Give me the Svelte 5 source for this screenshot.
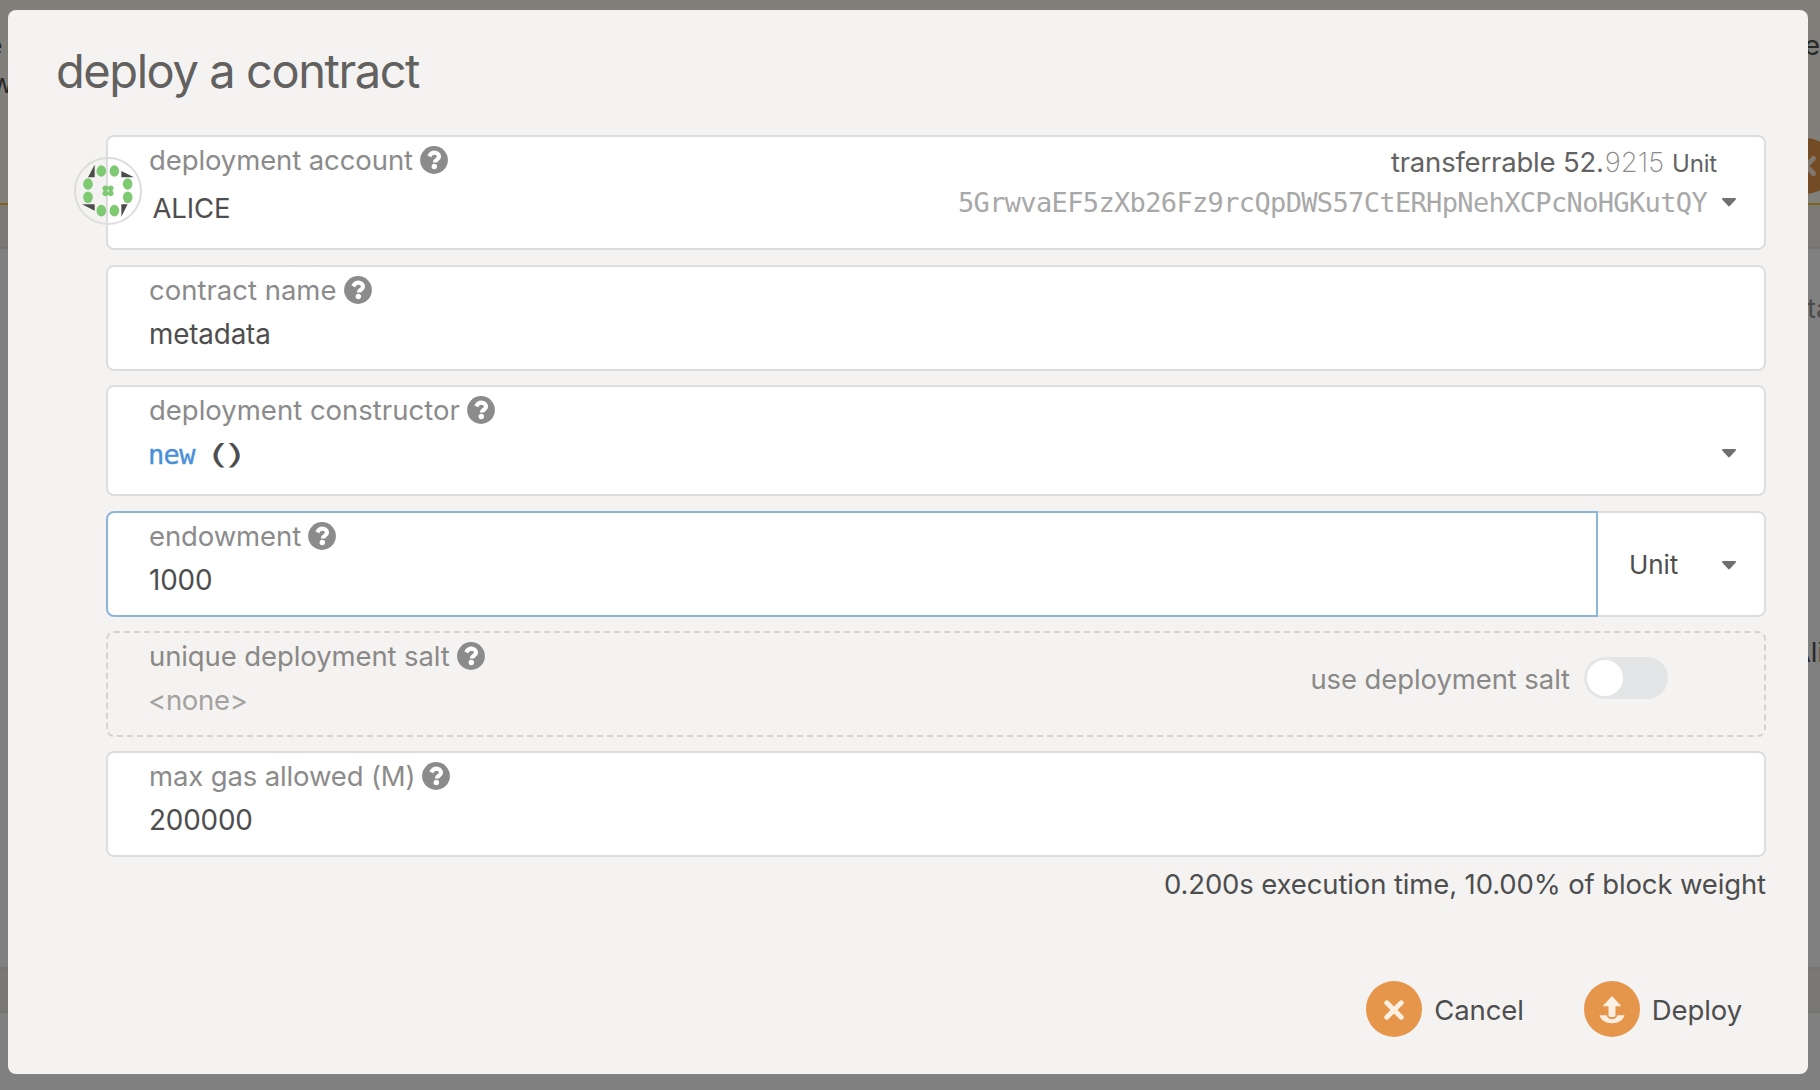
<script>
  const address = '5GrwvaEF5zXb26Fz9rcQpDWS57CtERHpNehXCPcNoHGKutQY';
  const dots = [
    [124, 93], [163, 93], [203, 132], [203, 172],
    [163, 212], [124, 212], [84, 172], [84, 132]
  ];
  const core = [[136, 145], [152, 145], [136, 160], [152, 160]];
</script>

{#snippet help()}
  <svg class="help" viewBox="0 0 28 28">
    <circle cx="14" cy="14" r="13.9" />
    <path d="M9.3 10.3C10.4 7.9 12 6.7 14.5 6.7c2.5 0 4.5 1.7 4.5 3.8 0 3.3-4.2 3.2-4.2 6.1" />
    <circle class="dot" cx="14.3" cy="20.5" r="2.7" />
  </svg>
{/snippet}

{#snippet caret()}
  <svg class="caret" viewBox="0 0 14 9">
    <path d="M1 0H13C14 0 14.3 1 13.600 1.700L8 7.700Q7 8.700 6 7.700L.4 1.700C-.3 1 0 0 1 0Z" />
  </svg>
{/snippet}

<div class="page">
  <div class="band top"></div>
  <div class="band tabs"></div>
  <div class="band body"></div>
  <div class="band strip"></div>
  <span class="behind l1">e</span>
  <span class="behind l2">w</span>
  <span class="behind r1">e</span>
  <span class="behind r2">ta</span>
  <span class="behind r3">Ali</span>
  <svg class="behind-close" viewBox="0 0 56 56">
    <circle cx="28" cy="28" r="28" />
    <path d="M20.500 20.500 35.500 35.500M35.500 20.500 20.500 35.500" />
  </svg>

  <main class="modal">
    <h1>deploy a contract</h1>
    <div class="form">
      <section class="field account">
        <svg class="identicon" viewBox="42 51 204 204">
          <circle class="ring" cx="144" cy="153" r="99" />
          <path d="M104 74V112H84ZM184 93V112H222ZM66 193H104V212ZM184 193H203L184 230Z" />
          {#each dots as [x, y]}<ellipse cx={x} cy={y} rx="14.500" ry="17.500" />{/each}
          {#each core as [x, y]}<circle class="seed" cx={x} cy={y} r="8.500" />{/each}
        </svg>
        <div class="main">
          <div class="label">deployment account {@render help()}</div>
          <div class="value">ALICE</div>
        </div>
        <div class="details">
          <div class="balance"><span>transferrable 52.</span><span class="decimals">9215</span><span class="unit">Unit</span></div>
          <div class="address"><code>{address}</code>{@render caret()}</div>
        </div>
      </section>

      <section class="field">
        <div class="main">
          <div class="label wide">contract name {@render help()}</div>
          <div class="value text">metadata</div>
        </div>
      </section>

      <section class="field ctor">
        <div class="main">
          <div class="label wide">deployment constructor {@render help()}</div>
          <div class="value"><code>new</code><span class="parens">()</span></div>
        </div>
        {@render caret()}
      </section>

      <div class="row">
        <section class="field focused">
          <div class="main">
            <div class="label">endowment {@render help()}</div>
            <div class="value text">1000</div>
          </div>
        </section>
        <section class="field units"><span>Unit</span>{@render caret()}</section>
      </div>

      <section class="field dashed">
        <div class="main">
          <div class="label">unique deployment salt {@render help()}</div>
          <div class="value">&lt;none&gt;</div>
        </div>
        <div class="switch"><span>use deployment salt</span><i class="toggle"></i></div>
      </section>

      <section class="field">
        <div class="main">
          <div class="label narrow">max gas allowed (M) {@render help()}</div>
          <div class="value text">200000</div>
        </div>
      </section>
      <p class="note">0.200s execution time, 10.00% of block weight</p>
    </div>

    <footer>
      <div class="button">
        <svg viewBox="0 0 56 56">
          <circle cx="28" cy="28" r="28" />
          <path class="cross" d="M20.800 21.800 35.200 36.200M35.200 21.800 20.800 36.200" />
        </svg>
        <span>Cancel</span>
      </div>
      <div class="button">
        <svg viewBox="0 0 56 56">
          <circle cx="28" cy="28" r="28" />
          <path class="glyph" d="M28 15 37.500 25.300H31.500V34Q31.500 36 29.500 36H26.500Q24.500 36 24.500 34V25.300H18.500ZM15.500 34.300H22.500Q24 38.200 28 38.200T33.500 34.300H40.500Q38 42.300 28 42.300T15.500 34.300Z" />
        </svg>
        <span>Deploy</span>
      </div>
    </footer>
  </main>
</div>

<style>
  :global(body) { margin: 0; }
  .page {
    position: relative;
    display: flex;
    flex-direction: column;
    box-sizing: border-box;
    width: 1820px;
    height: 1090px;
    padding: 10px 12px 16px 8px;
    overflow: hidden;
    background: #808080;
    color: #4e4e4e;
    font-family: Inter, sans-serif;
    font-size: 27.5px;
    letter-spacing: -0.1px;
  }
  .band { position: absolute; left: 0; right: 0; box-sizing: border-box; }
  .top { top: 0; height: 205px; background: #817f7a; border-bottom: 2px solid #80611a; }
  .tabs { top: 205px; height: 44px; background: #7b7976; border-bottom: 2px solid #767470; }
  .body { top: 249px; height: 718px; background: #808080; }
  .strip { top: 967px; height: 46px; background: #7a7875; border: solid #767470; border-width: 2px 0; }
  .behind { position: absolute; line-height: 34px; color: #292929; }
  .l1 { right: 1817.5px; top: 28px; }
  .l2 { left: -9px; top: 66px; }
  .r1 { left: 1804px; top: 28px; }
  .r2 { left: 1807px; top: 291px; color: #4b4b4b; }
  .r3 { left: 1792px; top: 635px; }
  .behind-close { position: absolute; left: 1778px; top: 138px; width: 56px; height: 56px; }
  .behind-close circle { fill: #734b25; }
  .behind-close path { fill: none; stroke: #807870; stroke-width: 5; stroke-linecap: round; }

  .modal {
    position: relative;
    display: flex;
    flex-direction: column;
    flex: 1;
    box-sizing: border-box;
    padding: 32px 42px 37px 48px;
    border-radius: 8px;
    background: #f4f3f1;
  }
  h1 {
    margin: 0;
    height: 93px;
    line-height: 58px;
    font-size: 47px;
    font-weight: 440;
    letter-spacing: -1.43px;
    color: #62615f;
  }
  .form { display: flex; flex-direction: column; gap: 14px; padding-left: 50px; }
  .field {
    position: relative;
    display: flex;
    justify-content: space-between;
    box-sizing: border-box;
    height: 106px;
    padding: 6px 28px 0 41px;
    border: 2px solid #dddddd;
    border-radius: 8px;
    background: #fff;
  }
  .account { height: 115px; margin-bottom: 1px; }
  .ctor { height: 111px; margin-bottom: 1px; }
  .main { display: flex; flex-direction: column; }
  .label { display: flex; align-items: center; gap: 7px; height: 34px; color: #8b8b8b; white-space: nowrap; letter-spacing: -0.1px; }
  .wide { letter-spacing: 0; }
  .narrow { letter-spacing: -0.14px; }
  .value { height: 34px; line-height: 34px; margin-top: 10px; }
  .dashed .value { margin-left: -1px; letter-spacing: -0.3px; }
  .text { font-size: 27.800px; letter-spacing: -0.15px; }
  .help { width: 28px; height: 28px; }
  .help circle { fill: #8b8b8b; }
  .help path { fill: none; stroke: #fff; stroke-width: 4.200; }
  .help .dot { fill: #fff; }
  .caret { width: 14px; height: 9px; fill: #707070; }
  .identicon { position: absolute; left: -34px; top: 20px; width: 68px; height: 68px; }
  .ring { fill: none; stroke: #dddddd; stroke-width: 6; }
  .identicon path { fill: #4c4c4c; }
  .identicon ellipse, .seed { fill: #7fc972; }
  .account .value { margin: 14px 0 0 3.500px; }
  .details { display: flex; flex-direction: column; align-items: flex-end; }
  .balance { display: flex; align-items: baseline; height: 34px; line-height: 34px; margin: 2px 19px 0 0; color: #626262; letter-spacing: -0.2px; }
  .decimals { margin-left: 1px; font-weight: 200; color: #8a8a8a; letter-spacing: 0; }
  .unit { margin-left: 8px; font-size: 24px; }
  .address { display: flex; align-items: center; gap: 15px; height: 40px; margin-top: 3px; color: #a8a8a8; }
  code { font-family: "DejaVu Sans Mono", monospace; font-size: 27px; letter-spacing: -0.65px; }
  .ctor .value { display: flex; align-items: center; margin-top: 11px; }
  .ctor code { margin-left: -1px; color: #4a90d9; -webkit-text-stroke: 0.4px #4a90d9; }
  .parens { margin-left: 22px; transform: scaleX(2.2); font-size: 27px; font-weight: 260; letter-spacing: -1px; }
  .ctor > .caret { margin-top: 56px; }
  .row { display: flex; }
  .focused { z-index: 1; width: 1492px; border-color: #8db3d9; border-radius: 8px 0 0 8px; }
  .units { flex: 1; align-items: center; margin-left: -2px; padding: 0 28px 0 31px; border-radius: 0 8px 8px 0; font-size: 26px; }
  .units .caret { margin-top: 2px; }
  .dashed { border: 2px dashed #d5d4d2; background: transparent; }
  .dashed .value { color: #a3a2a0; }
  .dashed .label, .switch { color: #8a8987; }
  .switch { display: flex; align-items: center; gap: 14px; height: 42px; margin: 18px 68px 0 0; }
  .switch span { padding-top: 2px; }
  .toggle { box-sizing: border-box; width: 84px; height: 42px; padding: 3px; border-radius: 21px; background: #e4e5e7; }
  .toggle::before { content: ""; display: block; width: 36px; height: 36px; border-radius: 50%; background: #fff; }
  .note { margin: -4px 0 0; text-align: right; line-height: 34px; letter-spacing: -0.13px; }
  footer { display: flex; justify-content: flex-end; gap: 60px; margin-top: auto; padding-right: 24px; }
  .button { display: flex; align-items: center; gap: 12px; height: 56px; }
  .button span { padding-top: 2px; }
  .button svg { width: 56px; height: 56px; }
  .button circle { fill: #e5964b; }
  .cross { fill: none; stroke: #fdf0e3; stroke-width: 5; stroke-linecap: round; }
  .glyph { fill: #fdf0e3; }
</style>
